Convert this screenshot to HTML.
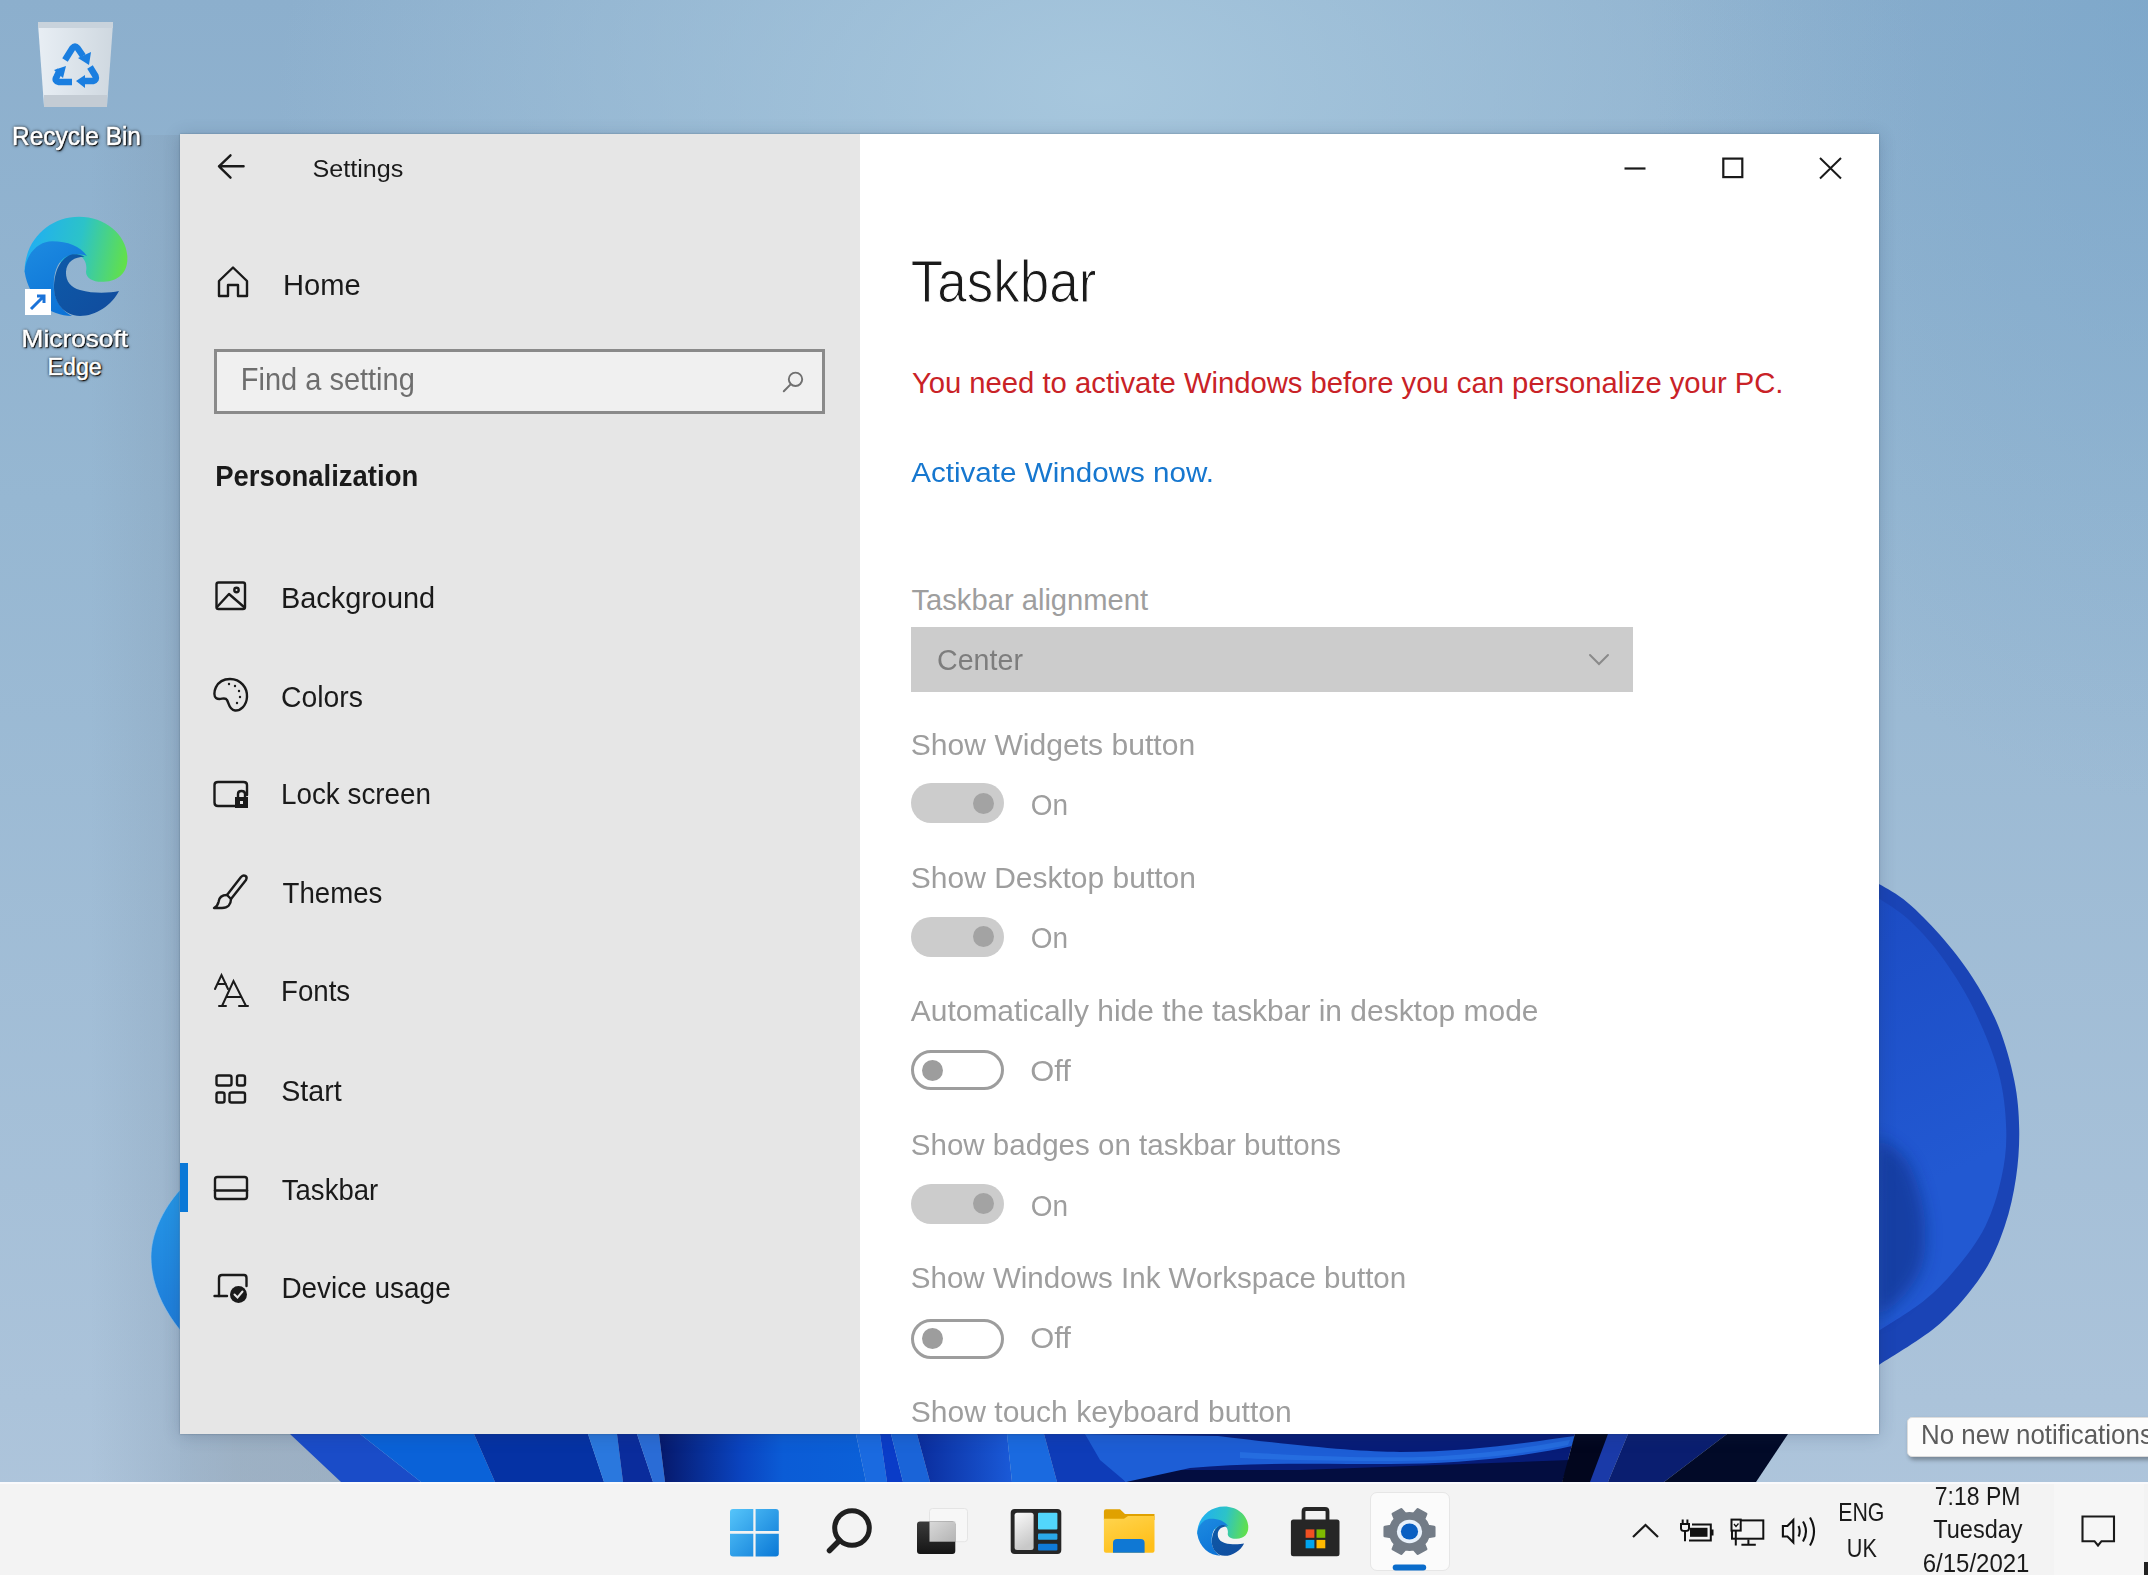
<!DOCTYPE html>
<html><head><meta charset="utf-8"><style>
*{margin:0;padding:0;box-sizing:border-box}
html,body{width:2148px;height:1575px;overflow:hidden;position:relative;font-family:"Liberation Sans",sans-serif}
.t{position:absolute;white-space:nowrap;line-height:1}
#wall{position:absolute;left:0;top:0;width:2148px;height:1575px;
 background:
  radial-gradient(ellipse 500px 800px at 2148px 0px, rgba(110,160,200,0.45), rgba(110,160,200,0) 100%),
  radial-gradient(ellipse 1100px 650px at 1100px 90px, rgba(168,200,222,0.95), rgba(168,200,222,0) 75%),
  linear-gradient(180deg,#8cafcd 0px,#96b7d2 500px,#abc3da 1400px,#b0c6dc 1575px);}
#bloom{position:absolute;left:0;top:0}
#shadeL{position:absolute;left:180px;top:1434px;width:180px;height:48px;background:linear-gradient(90deg,rgba(120,140,160,0.25) 0px,rgba(135,150,165,0.42) 60px,rgba(135,150,165,0.45) 180px)}
#shadeCol{position:absolute;left:90px;top:135px;width:90px;height:1347px;background:linear-gradient(90deg,rgba(120,140,160,0) 0px,rgba(120,140,160,0.22) 90px)}
#win{position:absolute;left:180px;top:134px;width:1699px;height:1300px;box-shadow:0 0 1.5px rgba(40,60,80,0.45),0 2px 16px rgba(30,50,80,0.22)}
#side{position:absolute;left:0;top:0;width:680px;height:1300px;background:#e6e6e6}
#main{position:absolute;left:680px;top:0;width:1019px;height:1300px;background:#fff}
#searchbox{position:absolute;left:214px;top:349px;width:611px;height:65px;background:#f0f0f0;border:3px solid #8a8a8a}
#navsel{position:absolute;left:180px;top:1163px;width:8px;height:49px;background:#0a78d7}
#dd{position:absolute;left:911px;top:627px;width:722px;height:65px;background:#cccccc}
.tg{position:absolute;left:910.5px;width:93px;height:40px;border-radius:20px}
.tg.on{background:#cccccc}
.tg.on i{position:absolute;left:62px;top:9.5px;width:21px;height:21px;border-radius:50%;background:#a3a3a3}
.tg.off{border:3px solid #9d9d9d;background:#fff}
.tg.off i{position:absolute;left:8.5px;top:6.5px;width:21px;height:21px;border-radius:50%;background:#9d9d9d}
#tip{position:absolute;left:1907px;top:1417px;width:260px;height:40px;background:#fcfcfc;border:1px solid #dcdcdc;border-radius:5px;box-shadow:2px 3px 4px rgba(0,0,0,0.32)}
#tb{position:absolute;left:0;top:1482px;width:2148px;height:93px;background:#f3f3f3;border-top:2px solid #fafafc}
#clk{position:absolute;left:2054px;top:1484px;width:90px;height:91px;background:#f6f6f6}
#tbsel{position:absolute;left:1369.5px;top:1491.5px;width:80.5px;height:79.5px;background:#fbfbfb;border:1px solid #e6e6e6;border-radius:7px}
</style></head><body>
<div id="wall"></div>
<div id="shadeCol"></div>
<svg id="bloom" width="2148" height="1575" viewBox="0 0 2148 1575">
<defs>
 <linearGradient id="rp" x1="0" y1="0" x2="1" y2="1">
  <stop offset="0" stop-color="#1e4fc4"/><stop offset="0.5" stop-color="#2160d6"/><stop offset="1" stop-color="#0f3596"/>
 </linearGradient>
 <linearGradient id="rpi" gradientUnits="userSpaceOnUse" x1="1879" y1="900" x2="2000" y2="1150"><stop offset="0" stop-color="#1c4cc4"/><stop offset="1" stop-color="#2259d2"/></linearGradient>
 <filter id="blur6" x="-50%" y="-50%" width="200%" height="200%"><feGaussianBlur stdDeviation="8"/></filter>
 <linearGradient id="lp" x1="0" y1="0" x2="0" y2="1">
  <stop offset="0" stop-color="#2596e6"/><stop offset="1" stop-color="#1e7cd9"/>
 </linearGradient>
 <linearGradient id="strip" x1="0" y1="0" x2="1" y2="0">
  <stop offset="0" stop-color="#1a4fd0"/>
  <stop offset="0.5" stop-color="#0a3ab0"/>
  <stop offset="1" stop-color="#06154a"/>
 </linearGradient>
</defs>
<!-- right petal -->
<path d="M1875.0 883.0 C1875.8 883.2 1874.5 881.3 1879.9 884.6 C1885.3 887.8 1897.4 894.0 1907.4 902.4 C1917.4 910.8 1929.0 922.4 1939.8 934.8 C1950.6 947.2 1962.5 961.8 1972.2 976.9 C1981.9 992.1 1991.1 1008.3 1998.1 1025.5 C2005.2 1042.8 2010.8 1063.3 2014.3 1080.6 C2017.8 1097.9 2018.9 1113.0 2019.2 1129.2 C2019.5 1145.4 2018.4 1161.6 2016.0 1177.8 C2013.5 1194.0 2010.3 1210.2 2004.6 1226.4 C1998.9 1242.7 1992.7 1258.9 1981.9 1275.1 C1971.1 1291.3 1956.8 1308.8 1939.8 1323.7 C1922.8 1338.5 1890.7 1357.1 1879.9 1364.2 C1869.1 1371.2 1875.8 1365.5 1875.0 1365.8 Z" fill="#1a44b6"/>
<path d="M1875.0 897.5 C1875.8 897.8 1874.5 895.7 1879.9 899.2 C1885.3 902.7 1897.4 909.4 1907.4 918.6 C1917.4 927.8 1929.0 939.7 1939.8 954.3 C1950.6 968.8 1962.5 986.7 1972.2 1006.1 C1981.9 1025.5 1992.5 1050.4 1998.1 1070.9 C2003.8 1091.4 2005.7 1111.4 2006.2 1129.2 C2006.8 1147.1 2004.9 1161.6 2001.4 1177.8 C1997.9 1194.0 1992.7 1211.3 1985.2 1226.4 C1977.6 1241.6 1966.3 1256.2 1956.0 1268.6 C1945.7 1281.0 1936.3 1290.7 1923.6 1301.0 C1910.9 1311.2 1888.0 1324.8 1879.9 1330.1 C1871.8 1335.4 1875.8 1332.3 1875.0 1332.7 Z" fill="url(#rpi)"/>
<path d="M1875.0 1139.0 C1875.8 1139.0 1874.5 1135.2 1879.9 1139.0 C1885.3 1142.7 1900.1 1149.8 1907.4 1161.6 C1914.7 1173.5 1920.9 1194.0 1923.6 1210.2 C1926.3 1226.4 1926.3 1245.4 1923.6 1258.9 C1920.9 1272.4 1914.7 1281.5 1907.4 1291.3 C1900.1 1301.0 1885.3 1312.3 1879.9 1317.2 C1874.5 1322.0 1875.8 1319.9 1875.0 1320.4 Z" fill="#0d2a80" opacity="0.55" filter="url(#blur6)"/>
<!-- left petal -->
<path d="M180 1190 C162 1210 151 1235 151 1257 C151 1285 164 1310 180 1330 Z" fill="url(#lp)" stroke="#8cc0ea" stroke-width="1" stroke-opacity="0.6"/>
</svg>
<div id="shadeL"></div>
<svg id="strip" width="2148" height="48" viewBox="0 1434 2148 48" style="position:absolute;left:0;top:1434px">
<defs>
 <linearGradient id="g1" x1="0" x2="1"><stop offset="0" stop-color="#0a2c9c"/><stop offset="1" stop-color="#1a5ad8"/></linearGradient>
 <linearGradient id="g2" x1="0" x2="1"><stop offset="0" stop-color="#06186a"/><stop offset="0.4" stop-color="#0a44c0"/><stop offset="0.6" stop-color="#0b5cd6"/><stop offset="1" stop-color="#0b60d8"/></linearGradient>
 <linearGradient id="g3" x1="0" x2="0" y1="0" y2="1"><stop offset="0" stop-color="#0a1c70"/><stop offset="0.35" stop-color="#1d5fd4"/><stop offset="0.6" stop-color="#0b2c9a"/><stop offset="1" stop-color="#030b3a"/></linearGradient>
</defs>
<polygon points="290,1434 360,1434 421,1482 341,1482" fill="#1a4cc8"/>
<polygon points="360,1434 474,1434 495,1482 421,1482" fill="#0a62d8"/>
<polygon points="474,1434 588,1434 604,1482 495,1482" fill="#0532a4"/>
<polygon points="588,1434 617,1434 623,1482 604,1482" fill="#2a78de"/>
<polygon points="617,1434 637,1434 653,1482 623,1482" fill="#0a2c9c"/>
<polygon points="637,1434 659,1434 665,1482 653,1482" fill="#2a6cd6"/>
<polygon points="659,1434 856,1434 866,1482 665,1482" fill="url(#g2)"/>
<polygon points="856,1434 880,1434 887,1482 866,1482" fill="#1a6ae0"/>
<polygon points="880,1434 891,1434 903,1482 887,1482" fill="#0a3cc8"/>
<polygon points="891,1434 917,1434 930,1482 903,1482" fill="#1a64d8"/>
<polygon points="917,1434 1007,1434 1012,1482 930,1482" fill="url(#g1)"/>
<polygon points="1007,1434 1044,1434 1057,1482 1012,1482" fill="#1a6ae0"/>
<polygon points="1044,1434 1085,1434 1126,1482 1057,1482" fill="#0e3cb8"/>
<polygon points="1085,1434 1575,1434 1562,1482 1126,1482" fill="#071c78"/>
<polygon points="1126,1482 1562,1482 1570,1460 1300,1470 1160,1470" fill="#030d40"/>
<path d="M1085 1434 L1218 1436 C1300 1446 1360 1452 1400 1452 C1470 1452 1530 1442 1575 1436 L1572 1446 C1520 1458 1450 1464 1390 1464 C1320 1464 1250 1462 1190 1468 L1126 1482 L1100 1460 Z" fill="#1d5ed6"/>
<path d="M1240 1452 C1320 1457 1380 1458 1420 1457 C1480 1455 1530 1447 1570 1440 L1568 1445 C1520 1455 1460 1461 1400 1461 C1330 1461 1280 1460 1240 1458 Z" fill="#2a74e4" opacity="0.7"/>
<polygon points="1575,1434 1608,1434 1606,1482 1562,1482" fill="#02061e"/>
<polygon points="1608,1434 1628,1434 1608,1482 1590,1482" fill="#1a3aa8"/>
<polygon points="1628,1434 1727,1434 1664,1482 1608,1482" fill="#0a1e70"/>
<polygon points="1727,1434 1788,1434 1756,1482 1664,1482" fill="#020a28"/>
</svg>
<svg style="position:absolute;left:0;top:0" width="160" height="400">
 <defs>
  <linearGradient id="binG" x1="0" y1="0" x2="1" y2="0"><stop offset="0" stop-color="#e8eef4"/><stop offset="1" stop-color="#cfd8e0"/></linearGradient>
  <linearGradient id="edgeTop" x1="0" y1="0" x2="1" y2="0.6"><stop offset="0" stop-color="#2fb5ea"/><stop offset="0.55" stop-color="#3cc6b0"/><stop offset="1" stop-color="#5bd85a"/></linearGradient>
  <linearGradient id="edgeL" x1="0" y1="0" x2="0.3" y2="1"><stop offset="0" stop-color="#1b7fd9"/><stop offset="1" stop-color="#1370d0"/></linearGradient>
  <symbol id="edgeSym" overflow="visible">
   <linearGradient id="eT" gradientUnits="userSpaceOnUse" x1="5" y1="30" x2="100" y2="50"><stop offset="0" stop-color="#21b0f0"/><stop offset="0.5" stop-color="#2cc3c8"/><stop offset="1" stop-color="#62e04a"/></linearGradient>
   <linearGradient id="eL" gradientUnits="userSpaceOnUse" x1="0" y1="30" x2="40" y2="99"><stop offset="0" stop-color="#1c8ae0"/><stop offset="1" stop-color="#0c72d6"/></linearGradient>
   <linearGradient id="eD" gradientUnits="userSpaceOnUse" x1="30" y1="40" x2="90" y2="99"><stop offset="0" stop-color="#0d5aa8"/><stop offset="1" stop-color="#114c9e"/></linearGradient>
   <path fill="url(#eT)" d="M0 55 C0 23 25 0 54.4 0 C81.4 0 102.8 19 102.8 41.6 C102.8 55 95 64 79 65 C69 65.5 61.4 62 61.4 55 C63 47 59.4 39 52.4 38.7 C45.4 38.4 39.4 41.2 37.4 45.2 L0 55 Z"/>
   <path fill="url(#eL)" d="M0 55 C1.4 35 15.4 24.4 27.4 24.4 C43.4 24.4 55.4 29.4 62.4 39.2 C57.4 37.2 47.4 36.2 39.4 41.2 C31.4 47.2 28.4 59.2 29.4 73.2 C31.4 87.2 39.4 95.2 47.4 99.2 C25.4 99.2 4.4 83.2 0 55 Z"/>
   <path fill="url(#eD)" d="M29.4 71.2 C29.4 55 36 40 48 37.5 C52 37 57 38 60 40 C50 40 42 45 41.4 55 C41 64 46 71 55.4 73.2 C69.4 77.2 85.4 76.2 94.4 74.2 C87.4 88.2 71.4 99.2 55.4 99.2 C39.4 99.2 29.4 85.2 29.4 71.2 Z"/>
  </symbol>
 </defs>
 <path d="M38 24 L113 24 L107 106 L44 106 Z" fill="url(#binG)"/>
 <rect x="38" y="22" width="75" height="6" fill="#c9d3dc"/>
 <rect x="44" y="95" width="63" height="12" fill="#c4ccd4"/>
 <g fill="none" stroke="#1a7ee0" stroke-width="6.5" stroke-linejoin="round">
  <path d="M65 60 L72.5 48 Q75 45 77.5 48 L83 56"/>
  <path d="M90 67 L95.5 76 Q97 80 93 81 L84 81"/>
  <path d="M72 82 L59 82 Q54 81 56.5 77 L60 70"/>
 </g>
 <g fill="#1a7ee0">
  <polygon points="78,58 91,52 89,65"/>
  <polygon points="85,75 85,88 76,81"/>
  <polygon points="54,70 66,66 63,78"/>
 </g>
 <!-- edge -->
 <use href="#edgeSym" transform="translate(24.6 216.8)"/>
 <rect x="25" y="289" width="26" height="26" fill="#fff"/>
 <path d="M31 309 L44 296 M37 296 L44 296 L44 303" stroke="#1a73d9" stroke-width="3" fill="none"/>
</svg>
<div class="t" style="left:12.00px;top:125.23px;font-size:24.43px;color:#fff;transform:scaleY(1.068);transform-origin:0 20.77px;-webkit-text-stroke:0.5px #fff;text-shadow:1px 1px 1px #000,0 0 3px rgba(0,0,0,0.9),1px 1px 3px rgba(0,0,0,0.7);">Recycle Bin</div>
<div class="t" style="left:21.60px;top:324.70px;font-size:26.24px;color:#fff;transform:scaleY(0.884);transform-origin:0 22.30px;-webkit-text-stroke:0.5px #fff;text-shadow:1px 1px 1px #000,0 0 3px rgba(0,0,0,0.9),1px 1px 3px rgba(0,0,0,0.7);">Microsoft</div>
<div class="t" style="left:47.60px;top:356.34px;font-size:23.13px;color:#fff;-webkit-text-stroke:0.5px #fff;text-shadow:1px 1px 1px #000,0 0 3px rgba(0,0,0,0.9),1px 1px 3px rgba(0,0,0,0.7);">Edge</div>
<div id="win"><div id="side"></div><div id="main"></div></div>
<div id="searchbox"></div>
<svg style="position:absolute;left:0;top:0" width="860" height="1434">
 <!-- back arrow -->
 <path d="M243.6 166.3 L219 166.3 M230.5 155.3 L219 166.3 L230.5 177.7" fill="none" stroke="#1a1a1a" stroke-width="2.4" stroke-linejoin="round" stroke-linecap="round"/>
 <!-- home -->
 <path d="M219 281 L233 267.5 L247 281 L247 296 L238 296 L238 285 L228 285 L228 296 L219 296 Z" fill="none" stroke="#1a1a1a" stroke-width="2.4" stroke-linejoin="round" stroke-linecap="round"/>
 <!-- background -->
 <rect x="216.5" y="582.5" width="28.5" height="26.5" rx="2" fill="none" stroke="#1a1a1a" stroke-width="2.4" stroke-linejoin="round" stroke-linecap="round"/>
 <path d="M217 607 L229 594 L244 607" fill="none" stroke="#1a1a1a" stroke-width="2.4" stroke-linejoin="round" stroke-linecap="round"/>
 <circle cx="236.5" cy="590" r="2.2" fill="none" stroke="#1a1a1a" stroke-width="2.4" stroke-linejoin="round" stroke-linecap="round"/>
 <!-- colors (palette) -->
 <path d="M230 679 C241 679 247.5 688 247 697 C246.5 706 240 711 235 710.5 C229 710 229 703 227 700 C225 696 220 701 216 698 C212 695 215 679 230 679 Z" fill="none" stroke="#1a1a1a" stroke-width="2.4" stroke-linejoin="round" stroke-linecap="round"/>
 <circle cx="229" cy="684" r="1.2" fill="#1a1a1a"/><circle cx="235" cy="686" r="1.2" fill="#1a1a1a"/><circle cx="239" cy="691" r="1.2" fill="#1a1a1a"/><circle cx="240" cy="697" r="1.2" fill="#1a1a1a"/><circle cx="237" cy="703" r="1.2" fill="#1a1a1a"/>
 <!-- lock screen -->
 <path d="M236 806 L218 806 C215.5 806 214.5 805 214.5 802.5 L214.5 785 C214.5 783 215.5 782 218 782 L243.5 782 C246 782 247 783 247 785 L247 795" fill="none" stroke="#1a1a1a" stroke-width="2.4" stroke-linejoin="round" stroke-linecap="round"/>
 <rect x="235" y="797" width="13" height="11" fill="#1a1a1a"/>
 <path d="M238 797.5 L238 794 C238 790 245 790 245 794 L245 797.5" fill="none" stroke="#1a1a1a" stroke-width="2.4" stroke-linejoin="round" stroke-linecap="round"/>
 <rect x="240" y="801" width="3" height="3" fill="#e6e6e6"/>
 <!-- themes brush -->
 <path d="M241 877 C244 874 248 876 246 880 L231 899 L227 895 Z" fill="none" stroke="#1a1a1a" stroke-width="2.4" stroke-linejoin="round" stroke-linecap="round"/>
 <path d="M227 895 C222 895 219 898 218.5 902 C218 905 216 907 214 908 L222 908 C228 908 231 904 231 899" fill="none" stroke="#1a1a1a" stroke-width="2.4" stroke-linejoin="round" stroke-linecap="round"/>
 <!-- fonts -->
 <path d="M215 989 L221.5 975 L228 989 M217.5 984 L226 984" fill="none" stroke="#1a1a1a" stroke-width="2" stroke-linecap="round"/>
 <path d="M222 1006 L233.5 981 L246 1006 M226.5 997 L241 997 M219 1006 L226 1006 M239 1006 L248 1006" fill="none" stroke="#1a1a1a" stroke-width="2" stroke-linecap="round"/>
 <!-- start -->
 <rect x="216.5" y="1075.5" width="15" height="10" rx="2" fill="none" stroke="#1a1a1a" stroke-width="2.4" stroke-linejoin="round" stroke-linecap="round"/>
 <rect x="237" y="1075.5" width="8" height="10" rx="2" fill="none" stroke="#1a1a1a" stroke-width="2.4" stroke-linejoin="round" stroke-linecap="round"/>
 <rect x="216.5" y="1092.5" width="8" height="10" rx="2" fill="none" stroke="#1a1a1a" stroke-width="2.4" stroke-linejoin="round" stroke-linecap="round"/>
 <rect x="229.5" y="1092.5" width="15.5" height="10" rx="2" fill="none" stroke="#1a1a1a" stroke-width="2.4" stroke-linejoin="round" stroke-linecap="round"/>
 <!-- taskbar -->
 <rect x="215" y="1177" width="32" height="22" rx="2.5" fill="none" stroke="#1a1a1a" stroke-width="2.4" stroke-linejoin="round" stroke-linecap="round"/>
 <path d="M215 1190.5 L247 1190.5" fill="none" stroke="#1a1a1a" stroke-width="2.4" stroke-linejoin="round" stroke-linecap="round"/>
 <!-- device usage -->
 <path d="M219 1296 L219 1278 C219 1276 220 1275 222 1275 L244 1275 C246 1275 246.5 1276 246.5 1278 L246.5 1286" fill="none" stroke="#1a1a1a" stroke-width="2.4" stroke-linejoin="round" stroke-linecap="round"/>
 <path d="M214.5 1296 L227 1296" fill="none" stroke="#1a1a1a" stroke-width="2.4" stroke-linejoin="round" stroke-linecap="round"/>
 <circle cx="238.5" cy="1294.5" r="8.5" fill="#1a1a1a"/>
 <path d="M234.5 1294.5 L237.5 1297.5 L242.5 1291.5" fill="none" stroke="#e6e6e6" stroke-width="2" stroke-linecap="round"/>
 <!-- search magnifier in box -->
 <circle cx="795.5" cy="379.3" r="6.7" fill="none" stroke="#707070" stroke-width="1.9"/>
 <path d="M790.6 384.4 L783.8 391.2" stroke="#707070" stroke-width="2" stroke-linecap="round"/>
</svg>
<div id="navsel"></div>
<div class="t" style="left:312.50px;top:156.33px;font-size:25.15px;color:#1a1a1a;transform:scaleY(0.928);transform-origin:0 21.37px;">Settings</div>
<div class="t" style="left:283.00px;top:270.63px;font-size:29.14px;color:#1a1a1a;transform:scaleY(1.040);transform-origin:0 24.77px;">Home</div>
<div class="t" style="left:240.80px;top:365.66px;font-size:28.99px;color:#6e6e6e;transform:scaleY(1.065);transform-origin:0 24.64px;">Find a setting</div>
<div class="t" style="left:215.20px;top:463.35px;font-size:27.47px;color:#1a1a1a;font-weight:bold;transform:scaleY(1.066);transform-origin:0 23.35px;">Personalization</div>
<div class="t" style="left:280.90px;top:584.22px;font-size:28.92px;color:#1a1a1a;transform:scaleY(1.032);transform-origin:0 24.58px;">Background</div>
<div class="t" style="left:281.00px;top:682.58px;font-size:28.37px;color:#1a1a1a;transform:scaleY(1.052);transform-origin:0 24.12px;">Colors</div>
<div class="t" style="left:281.00px;top:780.75px;font-size:27.83px;color:#1a1a1a;transform:scaleY(1.073);transform-origin:0 23.65px;">Lock screen</div>
<div class="t" style="left:282.50px;top:880.18px;font-size:27.67px;color:#1a1a1a;transform:scaleY(1.079);transform-origin:0 23.52px;">Themes</div>
<div class="t" style="left:281.00px;top:978.47px;font-size:27.68px;color:#1a1a1a;transform:scaleY(1.079);transform-origin:0 23.53px;">Fonts</div>
<div class="t" style="left:281.20px;top:1076.97px;font-size:28.63px;color:#1a1a1a;transform:scaleY(1.043);transform-origin:0 24.33px;">Start</div>
<div class="t" style="left:281.80px;top:1176.89px;font-size:27.54px;color:#1a1a1a;transform:scaleY(1.084);transform-origin:0 23.41px;">Taskbar</div>
<div class="t" style="left:281.40px;top:1274.94px;font-size:27.95px;color:#1a1a1a;transform:scaleY(1.068);transform-origin:0 23.76px;">Device usage</div>
<div class="t" style="left:910.80px;top:258.27px;font-size:52.97px;color:#1a1a1a;transform:scaleY(1.108);transform-origin:0 45.03px;-webkit-text-stroke:1px #fff;">Taskbar</div>
<div class="t" style="left:911.90px;top:368.95px;font-size:29.24px;color:#c92227;">You need to activate Windows before you can personalize your PC.</div>
<div class="t" style="left:911.20px;top:457.03px;font-size:29.61px;color:#1677cf;transform:scaleY(0.959);transform-origin:0 25.17px;">Activate Windows now.</div>
<div class="t" style="left:911.50px;top:585.51px;font-size:29.17px;color:#9e9e9e;">Taskbar alignment</div>
<div id="dd"></div>
<div class="t" style="left:937.00px;top:645.86px;font-size:28.63px;color:#7d7d7d;transform:scaleY(1.022);transform-origin:0 24.34px;">Center</div>
<svg style="position:absolute;left:0;top:0" width="1700" height="1440">
 <path d="M1590 655 L1599 664 L1608 655" fill="none" stroke="#8a8a8a" stroke-width="2" stroke-linecap="round"/>
</svg>
<div class="t" style="left:910.80px;top:729.82px;font-size:30.10px;color:#9e9e9e;transform:scaleY(0.963);transform-origin:0 25.58px;">Show Widgets button</div>
<div class="tg on" style="top:783.0px"><i></i></div>
<div class="t" style="left:1030.70px;top:792.25px;font-size:27.94px;color:#9e9e9e;transform:scaleY(1.037);transform-origin:0 23.75px;">On</div>
<div class="t" style="left:910.80px;top:863.10px;font-size:30.01px;color:#9e9e9e;transform:scaleY(0.966);transform-origin:0 25.50px;">Show Desktop button</div>
<div class="tg on" style="top:916.6px"><i></i></div>
<div class="t" style="left:1030.70px;top:925.25px;font-size:27.94px;color:#9e9e9e;transform:scaleY(1.037);transform-origin:0 23.75px;">On</div>
<div class="t" style="left:910.80px;top:996.43px;font-size:29.96px;color:#9e9e9e;transform:scaleY(0.967);transform-origin:0 25.47px;">Automatically hide the taskbar in desktop mode</div>
<div class="tg off" style="top:1050.4px"><i></i></div>
<div class="t" style="left:1030.20px;top:1055.73px;font-size:30.91px;color:#9e9e9e;transform:scaleY(0.938);transform-origin:0 26.27px;">Off</div>
<div class="t" style="left:910.80px;top:1129.89px;font-size:29.54px;color:#9e9e9e;transform:scaleY(0.981);transform-origin:0 25.11px;">Show badges on taskbar buttons</div>
<div class="tg on" style="top:1183.8px"><i></i></div>
<div class="t" style="left:1030.70px;top:1192.55px;font-size:27.94px;color:#9e9e9e;transform:scaleY(1.037);transform-origin:0 23.75px;">On</div>
<div class="t" style="left:910.80px;top:1263.28px;font-size:29.56px;color:#9e9e9e;transform:scaleY(0.981);transform-origin:0 25.12px;">Show Windows Ink Workspace button</div>
<div class="tg off" style="top:1318.6px"><i></i></div>
<div class="t" style="left:1030.20px;top:1323.13px;font-size:30.91px;color:#9e9e9e;transform:scaleY(0.938);transform-origin:0 26.27px;">Off</div>
<div class="t" style="left:910.80px;top:1396.96px;font-size:30.05px;color:#9e9e9e;transform:scaleY(0.965);transform-origin:0 25.54px;">Show touch keyboard button</div>
<svg style="position:absolute;left:0;top:0" width="1880" height="200">
 <path d="M1624.5 168.5 L1645.5 168.5" stroke="#1a1a1a" stroke-width="2.2"/>
 <rect x="1723.3" y="158.6" width="19" height="18.5" fill="none" stroke="#1a1a1a" stroke-width="2.2"/>
 <path d="M1820 158 L1841 178.5 M1841 158 L1820 178.5" stroke="#1a1a1a" stroke-width="2"/>
</svg>
<div id="tip"></div>
<div class="t" style="left:1921.00px;top:1423.37px;font-size:25.92px;color:#5c5c5c;transform:scaleY(1.040);transform-origin:0 22.03px;">No new notifications</div>
<div id="tb"></div>
<div id="clk"></div>
<div id="tbsel"></div>
<svg style="position:absolute;left:0;top:1482px" width="2148" height="93" viewBox="0 1482 2148 93">
 <defs>
  <linearGradient id="win1" gradientUnits="userSpaceOnUse" x1="730" y1="1509" x2="779" y2="1556"><stop offset="0" stop-color="#56c5fa"/><stop offset="1" stop-color="#0a78d6"/></linearGradient>
  <linearGradient id="tv1" x1="0" y1="0" x2="0" y2="1"><stop offset="0" stop-color="#3b3b3b"/><stop offset="1" stop-color="#151515"/></linearGradient>
  <linearGradient id="tv2" x1="0" y1="0" x2="1" y2="1"><stop offset="0" stop-color="#d9d9d9"/><stop offset="1" stop-color="#b4b4b4"/></linearGradient>
  <linearGradient id="wd1" x1="0" y1="0" x2="0.3" y2="1"><stop offset="0" stop-color="#fafafa"/><stop offset="1" stop-color="#c8c8c8"/></linearGradient>
  <linearGradient id="fe1" x1="0" y1="0" x2="0.5" y2="1"><stop offset="0" stop-color="#ffd54f"/><stop offset="1" stop-color="#ffbf1a"/></linearGradient>
  <linearGradient id="edT" x1="0" y1="0" x2="1" y2="0.7"><stop offset="0" stop-color="#2ab4f0"/><stop offset="0.5" stop-color="#34c3b8"/><stop offset="1" stop-color="#58d95a"/></linearGradient>
 </defs>
 <!-- start -->
 <g fill="url(#win1)">
  <path d="M733 1509 L753.3 1509 L753.3 1531.1 L730 1531.1 L730 1512 Q730 1509 733 1509 Z"/>
  <path d="M755.6 1509 L775.8 1509 Q778.8 1509 778.8 1512 L778.8 1531.1 L755.6 1531.1 Z"/>
  <path d="M730 1533.7 L753.3 1533.7 L753.3 1556.5 L733 1556.5 Q730 1556.5 730 1553.5 Z"/>
  <path d="M755.6 1533.7 L778.8 1533.7 L778.8 1553.5 Q778.8 1556.5 775.8 1556.5 L755.6 1556.5 Z"/>
 </g>
 <!-- search -->
 <circle cx="852" cy="1528" r="17.3" fill="none" stroke="#1f1f1f" stroke-width="5"/>
 <path d="M839.5 1540.5 L829.5 1550.5" stroke="#1f1f1f" stroke-width="5.5" stroke-linecap="round"/>
 <!-- task view -->
 <rect x="929.5" y="1508.5" width="38" height="33.2" rx="3" fill="#f7f7f7" stroke="#e4e4e4" stroke-width="1"/>
 <rect x="917" y="1521.5" width="38.3" height="32.5" rx="3" fill="url(#tv1)"/>
 <rect x="929.5" y="1521.5" width="25.8" height="20.2" fill="url(#tv2)"/>
 <!-- widgets -->
 <rect x="1010.7" y="1508.9" width="50.6" height="45.1" rx="4" fill="#262626"/>
 <rect x="1014.6" y="1512.8" width="19" height="37.2" rx="2.5" fill="url(#wd1)"/>
 <rect x="1038" y="1512.8" width="19.4" height="16.6" rx="1" fill="#52d6fc"/>
 <rect x="1038" y="1533.4" width="19.4" height="6.3" rx="1" fill="#2aa8e8"/>
 <rect x="1038" y="1543.7" width="19.4" height="6.7" rx="1" fill="#0f7ad8"/>
 <!-- file explorer -->
 <path d="M1106 1509.2 L1120 1509.2 L1125 1514 L1154.5 1514 L1154.5 1520 L1103.9 1520 L1103.9 1511.5 Q1103.9 1509.2 1106 1509.2 Z" fill="#e0a100"/>
 <path d="M1103.9 1518.7 L1124 1518.7 L1128 1516 L1154.5 1516 L1154.5 1550.8 Q1154.5 1552.8 1152.5 1552.8 L1106 1552.8 Q1103.9 1552.8 1103.9 1550.8 Z" fill="url(#fe1)"/>
 <path d="M1113 1552.8 L1113 1543 Q1113 1539 1117 1539 L1140.6 1539 Q1144.6 1539 1144.6 1543 L1144.6 1552.8 Z" fill="#0f78d4"/>
 <!-- edge -->
 <use href="#edgeSym" transform="translate(1197.2 1506.5) scale(0.497)"/>
 <!-- store -->
 <path d="M1303.5 1520 L1303.5 1511.5 Q1303.5 1509 1306 1509 L1325 1509 Q1327.5 1509 1327.5 1511.5 L1327.5 1520" fill="none" stroke="#262626" stroke-width="3.8"/>
 <rect x="1290.9" y="1519.4" width="48.6" height="36.8" rx="2.5" fill="#262626"/>
 <rect x="1305.6" y="1529.4" width="8.8" height="8.4" fill="#f25022"/>
 <rect x="1316.5" y="1529.4" width="8.8" height="8.4" fill="#7fba00"/>
 <rect x="1305.6" y="1539.9" width="8.8" height="8.4" fill="#00a4ef"/>
 <rect x="1316.5" y="1539.9" width="8.8" height="8.4" fill="#ffb900"/>
 <!-- settings gear -->
 <g transform="translate(1409.5 1531.5) scale(1 0.93)">
  <path id="gear" fill="#737c87" stroke="#737c87" stroke-width="3" stroke-linejoin="round" d="M16.89 9.75 L18.65 5.70 L24.54 4.77 L24.54 -4.77 L18.65 -5.70 L16.89 -9.75 L14.26 -13.30 L16.40 -18.87 L8.14 -23.64 L4.39 -19.00 L0.00 -19.50 L-4.39 -19.00 L-8.14 -23.64 L-16.40 -18.87 L-14.26 -13.30 L-16.89 -9.75 L-18.65 -5.70 L-24.54 -4.77 L-24.54 4.77 L-18.65 5.70 L-16.89 9.75 L-14.26 13.30 L-16.40 18.87 L-8.14 23.64 L-4.39 19.00 L-0.00 19.50 L4.39 19.00 L8.14 23.64 L16.40 18.87 L14.26 13.30 Z"/>
  <circle r="12.6" fill="#e8f1fb"/>
  <circle r="8.6" fill="#0a5fc2"/>
 </g>
 <rect x="1392.7" y="1564.6" width="33.5" height="5.9" rx="3" fill="#0a6ccb"/>
 <!-- tray -->
 <path d="M1633 1537 L1645.5 1525 L1658 1537" fill="none" stroke="#1a1a1a" stroke-width="2.2"/>
 <g fill="none" stroke="#111" stroke-width="2">
  <path d="M1682.7 1519.4 L1682.7 1524 M1687.4 1519.4 L1687.4 1524"/>
  <path d="M1681 1524 L1689 1524 L1689 1528.5 Q1689 1531 1685 1531 Q1681 1531 1681 1528.5 Z"/>
  <path d="M1685 1531 L1685 1541.3"/>
  <path d="M1692 1524.5 L1710.8 1524.5 L1710.8 1540.6 L1689 1540.6"/>
 </g>
 <rect x="1690" y="1527.8" width="17.5" height="9" fill="#111"/>
 <rect x="1710.5" y="1529.5" width="3" height="6" fill="#111"/>
 <g fill="none" stroke="#111" stroke-width="2">
  <rect x="1732" y="1520.4" width="31.3" height="18.3"/>
  <path d="M1748.4 1539.5 L1748.4 1544.6 M1741.4 1544.8 L1755.8 1544.8 M1735.8 1530.6 L1735.8 1545.5"/>
 </g>
 <rect x="1731.5" y="1519.6" width="9.2" height="11" fill="#f3f3f3" stroke="#111" stroke-width="2"/>
 <path d="M1734 1524 L1736 1526.5 L1738.5 1523.5" fill="none" stroke="#111" stroke-width="1.3"/>
 <g fill="none" stroke="#111" stroke-width="2.1">
  <path d="M1782.9 1526 L1787.5 1526 L1793.3 1520 L1793.3 1542.5 L1787.5 1536.5 L1782.9 1536.5 Z"/>
  <path d="M1798.5 1526 Q1801 1531.3 1798.5 1536.5" />
  <path d="M1803 1521.5 Q1809 1531.3 1803 1541.5" />
  <path d="M1810 1517.5 Q1818 1531.3 1810 1545.5" />
 </g>
 <!-- notification -->
 <path d="M2082.5 1516.5 L2114 1516.5 L2114 1541.2 L2101.5 1541.2 L2098 1545.5 L2094.5 1541.2 L2082.5 1541.2 Z" fill="none" stroke="#1a1a1a" stroke-width="2.1"/>
 <rect x="2144" y="1562" width="4" height="13" fill="#222"/>
</svg>
<div class="t" style="left:1838.20px;top:1504.46px;font-size:21.34px;color:#1a1a1a;transform:scaleY(1.222);transform-origin:0 18.14px;">ENG</div>
<div class="t" style="left:1846.80px;top:1539.49px;font-size:21.65px;color:#1a1a1a;transform:scaleY(1.205);transform-origin:0 18.41px;">UK</div>
<div class="t" style="left:1934.80px;top:1486.44px;font-size:23.01px;color:#1a1a1a;transform:scaleY(1.083);transform-origin:0 19.56px;">7:18 PM</div>
<div class="t" style="left:1933.30px;top:1519.10px;font-size:23.53px;color:#1a1a1a;transform:scaleY(1.066);transform-origin:0 20.00px;">Tuesday</div>
<div class="t" style="left:1922.70px;top:1551.80px;font-size:24.00px;color:#1a1a1a;transform:scaleY(1.045);transform-origin:0 20.40px;">6/15/2021</div>
</body></html>
